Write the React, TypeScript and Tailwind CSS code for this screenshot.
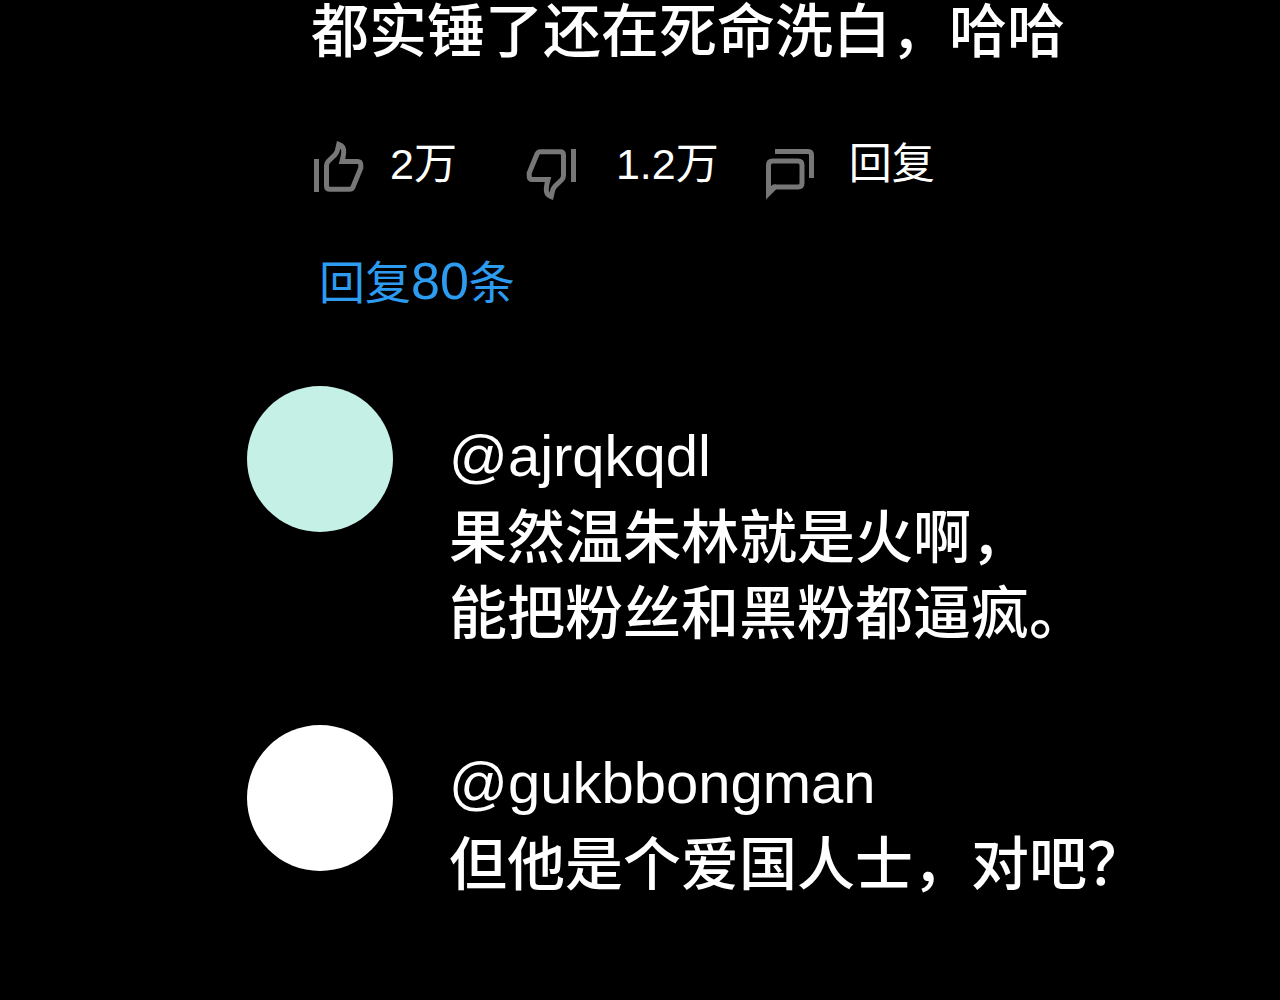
import type { ReactNode } from "react";

function ThumbUpIcon() {
  return (
    <svg width="50" height="52" viewBox="0 0 50 52" fill="none" stroke="#777777" strokeWidth="5" aria-hidden="true">
      <path d="M2.5 18V51" />
      <path d="M12.5 24.500Q12.500 22 14.500 20L21 13.800Q23.200 11.500 23.600 8.500L24.800 3.300Q30.200 5 29.700 11.500Q29.300 16 28 20.500H43.500Q46.800 20.500 46.800 24V27L39 46Q38 48.300 35.500 48.300H16Q12.500 48.300 12.500 45Z" />
    </svg>
  );
}

function ThumbDownIcon() {
  return (
    <svg width="50" height="52" viewBox="0 0 50 52" fill="none" stroke="#777777" strokeWidth="5" aria-hidden="true">
      <path d="M47.500 1V34" />
      <path d="M37.500 27.500Q37.500 30 35.500 32L29 38.200Q26.800 40.500 26.400 43.500L25.200 48.700Q19.800 47 20.300 40.500Q20.700 36 22 31.500H6.500Q3.200 31.500 3.200 28V25L11 6Q12 3.700 14.500 3.700H34Q37.500 3.700 37.500 7Z" />
    </svg>
  );
}

function RepliesIcon() {
  return (
    <svg width="50" height="52" viewBox="0 0 50 52" fill="none" stroke="#777777" strokeWidth="5" aria-hidden="true">
      <path d="M10 3.500H43Q46.500 3.500 46.500 7V30" />
      <path d="M3.500 42V17Q3.500 13 7.500 13H33Q37 13 37 17V35Q37 39 33 39H9" />
      <path d="M1 38V51.500L11 41.500V36.500H8L6 38Z" fill="#777777" stroke="none" />
    </svg>
  );
}

type CommentProps = { handle: string; avatar: string; offset: string; children: ReactNode };

function Comment({ handle, avatar, offset, children }: CommentProps) {
  return (
    <article className="flex items-start gap-14">
      <div className={`size-[146px] shrink-0 rounded-full ${avatar}`} />
      <div className={offset}>
        <h2 className="h-[82px] text-[58px] leading-[76px]">{handle}</h2>
        <p className="text-[58px] leading-[76px] font-medium">{children}</p>
      </div>
    </article>
  );
}

export default function App() {
  return (
    <main className="min-h-screen overflow-hidden bg-black pb-20 font-['Liberation_Sans','Noto_Sans_CJK_SC',sans-serif] text-white">
      <section className="pl-[311px]">
        <p className="text-[58px] leading-[64px] font-medium">都实锤了还在死命洗白，哈哈</p>
        <div className="mt-[70px] flex h-[66px] items-start pl-[3px] text-[43px] leading-[60px]">
          <button type="button" className="flex items-start gap-[26px]">
            <span className="pt-[7px]"><ThumbUpIcon /></span>
            <span>2万</span>
          </button>
          <button type="button" className="ml-[69px] flex items-start gap-[40px]">
            <span className="pt-[14px]"><ThumbDownIcon /></span>
            <span>1.2万</span>
          </button>
          <button type="button" className="ml-[46px] flex items-start gap-[34px]">
            <span className="pt-[14px]"><RepliesIcon /></span>
            <span>回复</span>
          </button>
        </div>
        <a href="#replies" className="mt-[48px] ml-2 block w-fit text-[46px] leading-[66px] text-[#2d9bf0]">
          回复<span className="text-[52px]">80</span>条
        </a>
      </section>
      <section id="replies" className="mt-[70px] flex flex-col gap-[73px] pl-[247px]">
        <Comment handle="@ajrqkqdl" avatar="bg-[#c4f0e5]" offset="pt-8">
          果然温朱林就是火啊，
          <br />
          能把粉丝和黑粉都逼疯。
        </Comment>
        <Comment handle="@gukbbongman" avatar="bg-white" offset="pt-5">
          但他是个爱国人士，对吧？
        </Comment>
      </section>
    </main>
  );
}
